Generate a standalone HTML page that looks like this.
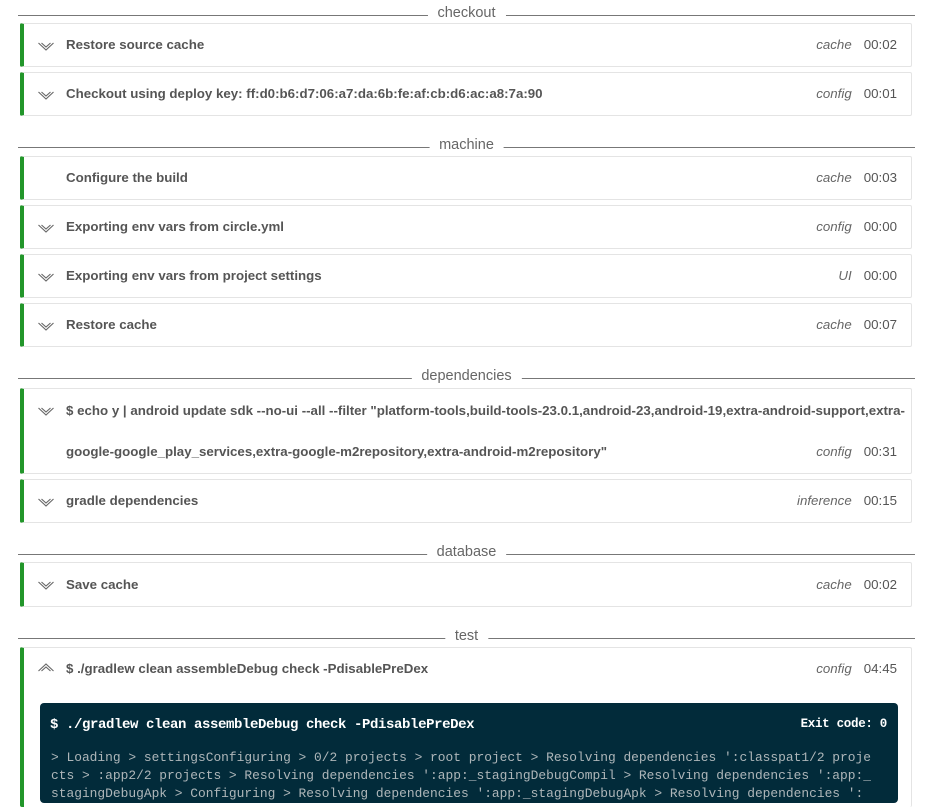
<!DOCTYPE html>
<html><head><meta charset="utf-8"><style>
*{margin:0;padding:0;box-sizing:border-box}
body{width:935px;height:790px;overflow:hidden;background:#fff;font-family:"Liberation Sans",sans-serif;position:relative;color:#555}
.hd{position:absolute;left:18px;width:897px;height:1px;background:#777}
.hd span{position:absolute;left:50%;transform:translateX(-50%);top:-10px;background:#fff;padding:0 10px;font-size:14.5px;color:#666;line-height:16px}
.card{position:absolute;left:20px;width:892px;border:1px solid #e4e4e4;border-left:4px solid #22962a;border-radius:2px;background:#fff}
.t{position:absolute;left:42px;font-size:13.3px;font-weight:bold;color:#555;white-space:nowrap}
.ic{position:absolute;left:13px;width:18px;height:13px}
.r{position:absolute;right:14px;font-size:13.3px;white-space:nowrap;color:#555}
.r i{margin-right:12px;color:#666}
.con{position:absolute;left:40px;top:703px;width:858px;height:100px;background:#022b3a;border-radius:4px;font-family:"Liberation Mono",monospace;color:#fff}
</style></head><body>
<svg width="0" height="0" style="position:absolute"><defs>
<symbol id="dn" viewBox="0 0 18 13"><path d="M1.5 3 L9 10 L16.5 3 M4.5 3 L9 7 L13.5 3" fill="none" stroke="#666" stroke-width="1.1"/></symbol>
<symbol id="up" viewBox="0 0 18 13"><path d="M1.5 10 L9 3 L16.5 10 M4.5 10 L9 6 L13.5 10" fill="none" stroke="#666" stroke-width="1.1"/></symbol>
</defs></svg>

<div class="hd" style="top:15px"><span>checkout</span></div>
<div class="card" style="top:23px;height:44px"><svg class="ic" style="top:16px"><use href="#dn"/></svg><div class="t" style="top:13px">Restore source cache</div><div class="r" style="top:13px"><i>cache</i>00:02</div></div>
<div class="card" style="top:72px;height:44px"><svg class="ic" style="top:16px"><use href="#dn"/></svg><div class="t" style="top:13px">Checkout using deploy key: ff:d0:b6:d7:06:a7:da:6b:fe:af:cb:d6:ac:a8:7a:90</div><div class="r" style="top:13px"><i>config</i>00:01</div></div>

<div class="hd" style="top:147px"><span>machine</span></div>
<div class="card" style="top:156px;height:44px"><div class="t" style="top:13px">Configure the build</div><div class="r" style="top:13px"><i>cache</i>00:03</div></div>
<div class="card" style="top:205px;height:44px"><svg class="ic" style="top:16px"><use href="#dn"/></svg><div class="t" style="top:13px">Exporting env vars from circle.yml</div><div class="r" style="top:13px"><i>config</i>00:00</div></div>
<div class="card" style="top:254px;height:44px"><svg class="ic" style="top:16px"><use href="#dn"/></svg><div class="t" style="top:13px">Exporting env vars from project settings</div><div class="r" style="top:13px"><i>UI</i>00:00</div></div>
<div class="card" style="top:303px;height:44px"><svg class="ic" style="top:16px"><use href="#dn"/></svg><div class="t" style="top:13px">Restore cache</div><div class="r" style="top:13px"><i>cache</i>00:07</div></div>

<div class="hd" style="top:378px"><span>dependencies</span></div>
<div class="card" style="top:388px;height:86px"><svg class="ic" style="top:16px"><use href="#dn"/></svg><div class="t" style="top:14px">$ echo y | android update sdk --no-ui --all --filter "platform-tools,build-tools-23.0.1,android-23,android-19,extra-android-support,extra-</div><div class="t" style="top:55px">google-google_play_services,extra-google-m2repository,extra-android-m2repository"</div><div class="r" style="top:55px"><i>config</i>00:31</div></div>
<div class="card" style="top:479px;height:44px"><svg class="ic" style="top:16px"><use href="#dn"/></svg><div class="t" style="top:13px">gradle dependencies</div><div class="r" style="top:13px"><i>inference</i>00:15</div></div>

<div class="hd" style="top:554px"><span>database</span></div>
<div class="card" style="top:562px;height:45px"><svg class="ic" style="top:16px"><use href="#dn"/></svg><div class="t" style="top:14px">Save cache</div><div class="r" style="top:14px"><i>cache</i>00:02</div></div>

<div class="hd" style="top:638px"><span>test</span></div>
<div class="card" style="top:647px;height:160px;border-bottom:none"><svg class="ic" style="top:13px"><use href="#up"/></svg><div class="t" style="top:13px">$ ./gradlew clean assembleDebug check -PdisablePreDex</div><div class="r" style="top:13px"><i>config</i>04:45</div></div>
<div class="con">
<div style="position:absolute;left:10px;top:14px;font-size:14px;font-weight:bold;letter-spacing:-0.4px">$ ./gradlew clean assembleDebug check -PdisablePreDex</div>
<div style="position:absolute;right:11px;top:14px;font-size:12.5px;font-weight:bold;letter-spacing:-0.3px">Exit code: 0</div>
<div style="position:absolute;left:11px;top:46px;font-size:12.9px;line-height:18px;color:#aeb6b9;white-space:pre">&gt; Loading &gt; settingsConfiguring &gt; 0/2 projects &gt; root project &gt; Resolving dependencies ':classpat1/2 proje
cts &gt; :app2/2 projects &gt; Resolving dependencies ':app:_stagingDebugCompil &gt; Resolving dependencies ':app:_
stagingDebugApk &gt; Configuring &gt; Resolving dependencies ':app:_stagingDebugApk &gt; Resolving dependencies ':</div>
</div>
</body></html>
